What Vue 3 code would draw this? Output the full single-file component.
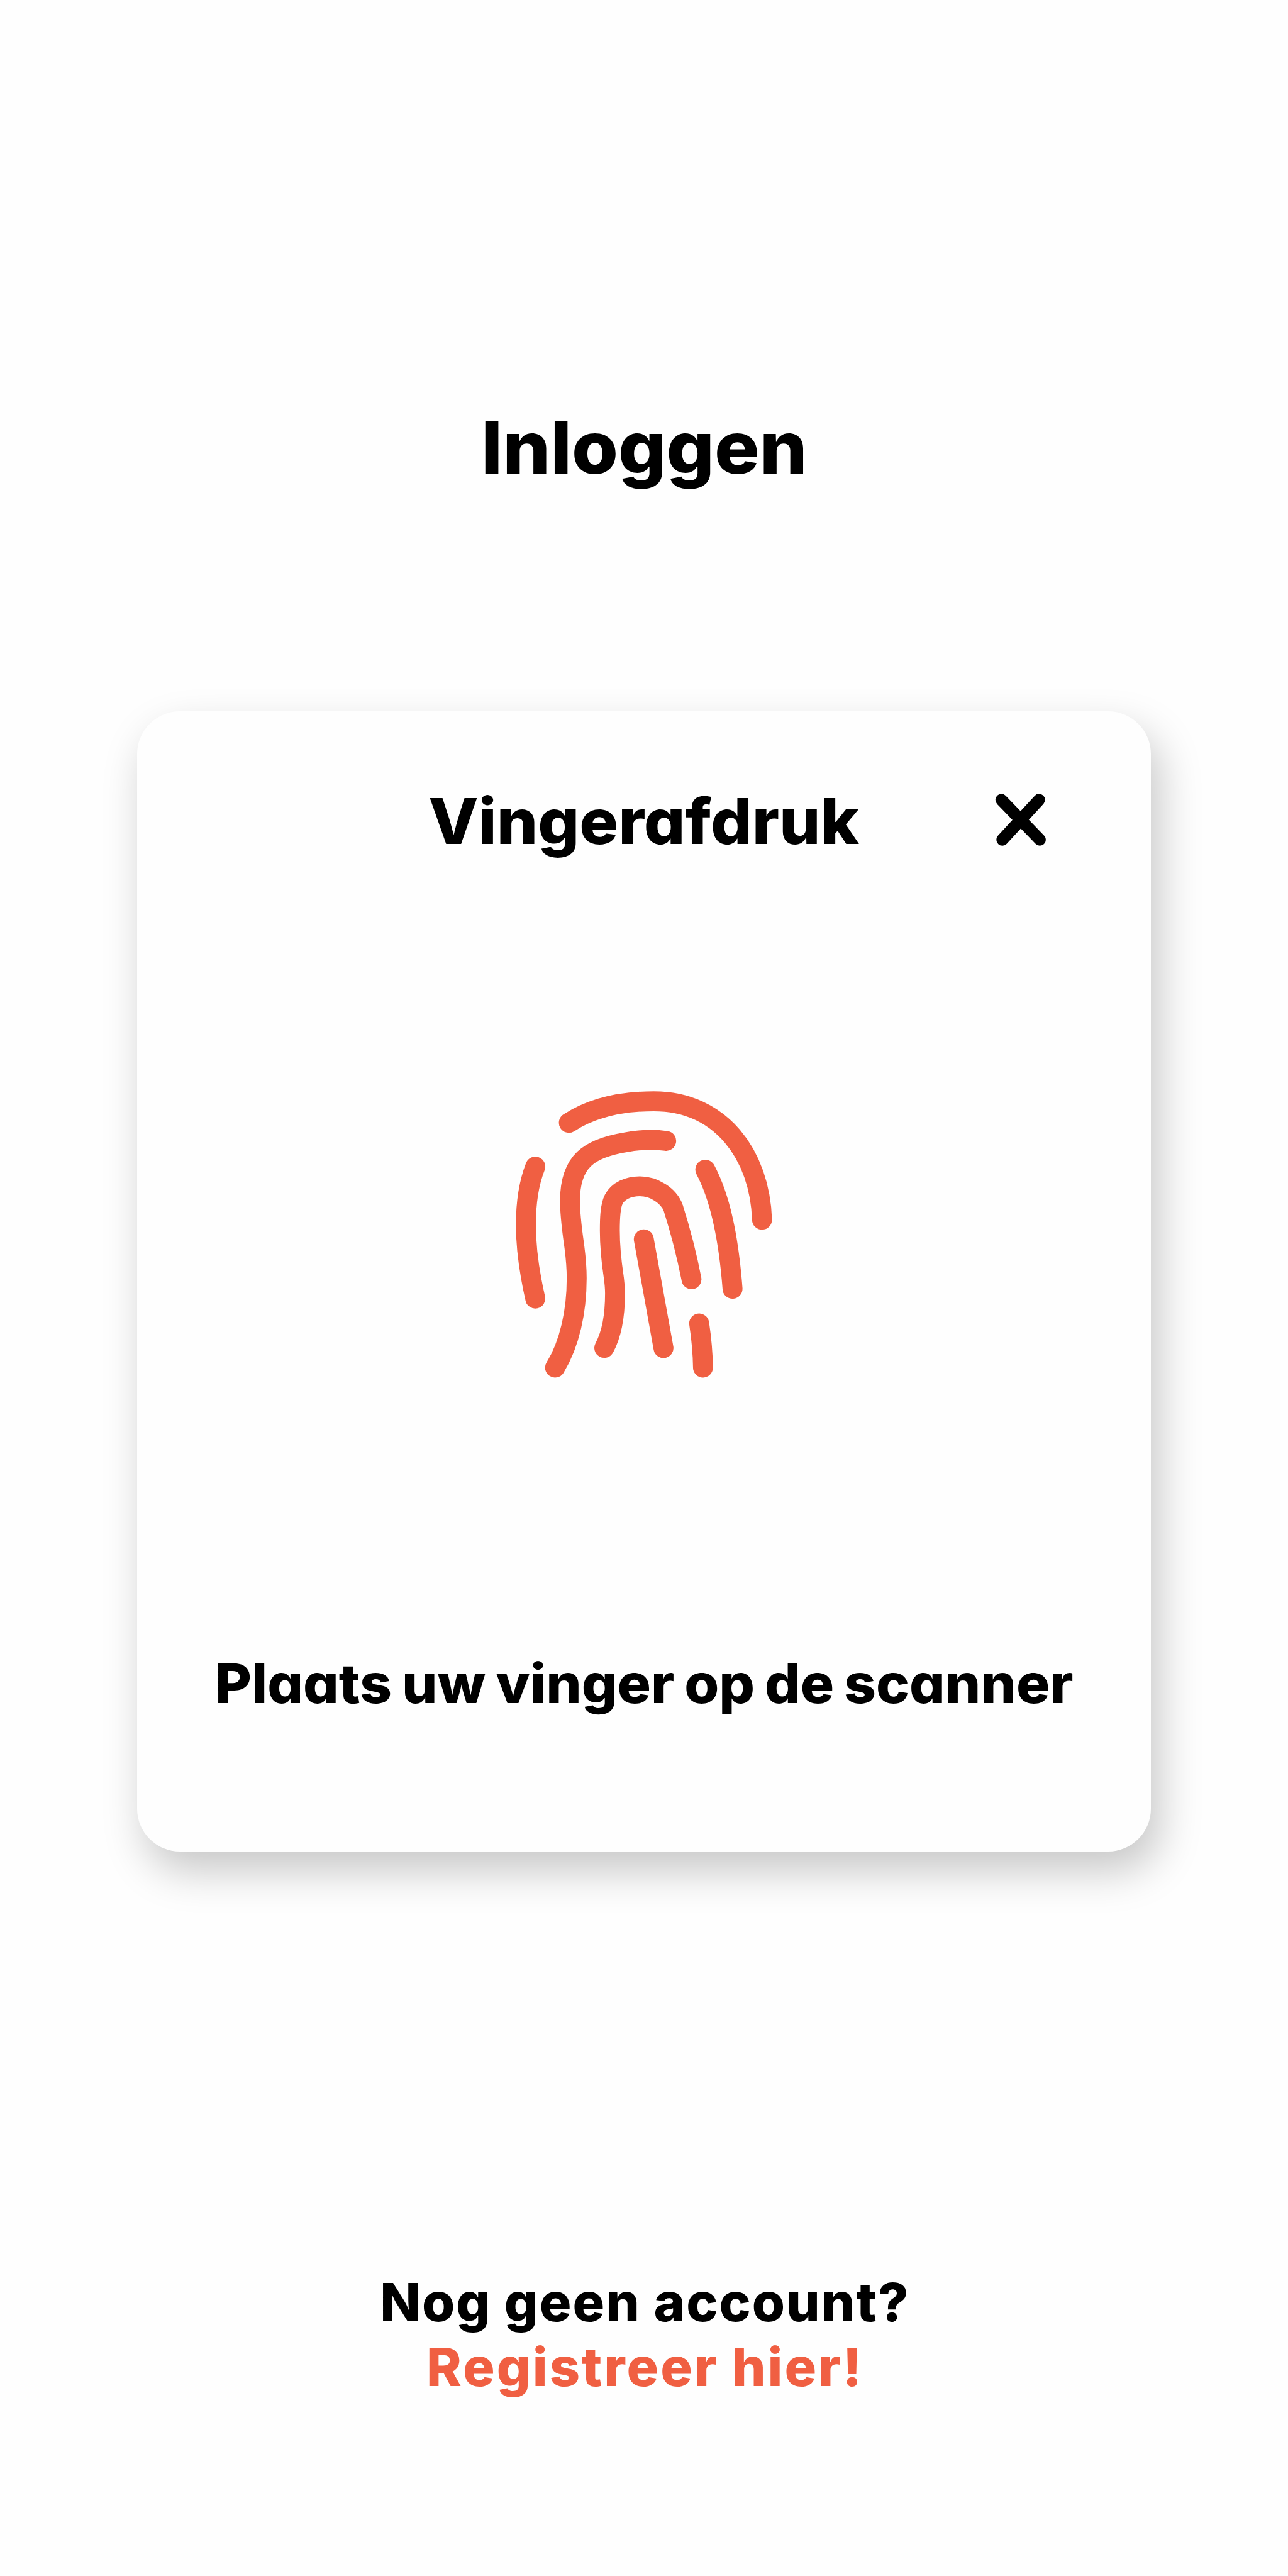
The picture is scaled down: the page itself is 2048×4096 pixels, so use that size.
<script setup>
const ridges = [
  'M175 114.8C230 79 300 64.6 372.8 64.6C530 64.6 620 190 625 340.6',
  'M401.8 156.9C374 153 338 154.5 308 160C222 174 177.7 204 177.7 296.5C177.7 335 184.5 378 188 404C191 427 193.3 452 193.3 477C193.3 553 177 630 142.9 684.9',
  'M96.9 216.7C82 255 75 300 75 351.5C75 410 84 468 96.9 524.2',
  'M492.9 223.8C528 290 547 381 556.3 501.3',
  'M257.6 639C275 607 282.6 560 282.6 512C282.6 498 281 484 279.5 473.5C274 437 270.5 402 270.5 366C270.5 340 271 310 279.5 293C290 273 314 262.6 340.2 262.6C373 262.6 408 284 418.3 313.3C433 360 449 419 460.7 479.3',
  'M349.6 386L395.5 639.5',
  'M478.6 582.1C484 618 487 652 487.5 684.9',
]
</script>

<template>
  <main class="page">
    <h1 class="title">Inloggen</h1>

    <section class="card">
      <header class="card-head">
        <h2 class="card-title">Vingerafdruk</h2>
        <button class="close" type="button" aria-label="Sluiten">
          <svg viewBox="0 0 200 220">
            <path d="M51.7 62.7L141.3 155.7M139.5 62.7L53.9 155.7" />
          </svg>
        </button>
      </header>
      <svg class="fingerprint" viewBox="0 0 700 750">
        <path v-for="d in ridges" :key="d" :d="d" />
      </svg>
      <p class="hint">Plaats uw vinger op de scanner</p>
    </section>

    <footer class="signup">
      <p class="question">Nog geen account?</p>
      <a class="register">Registreer hier!</a>
    </footer>
  </main>
</template>

<style>
body {
  margin: 0;
  background: #fefefe;
}
</style>

<style scoped>
.page {
  box-sizing: border-box;
  width: 2048px;
  height: 4096px;
  padding-top: 642px;
  display: flex;
  flex-direction: column;
  align-items: center;
  overflow: hidden;
  background: #fefefe;
  color: #000;
  font-family: Inter, sans-serif;
  font-weight: 800;
}

.title,
.card-title,
.hint,
.question {
  margin: 0;
  font-weight: 800;
  white-space: nowrap;
  text-align: center;
}

/* single-storey a and slightly extended letterforms */
.title,
.card-title,
.hint {
  font-feature-settings: 'cv11' 1;
}

.title {
  font-size: 115px;
  line-height: 140px;
  transform: scaleX(1.04);
}

.card {
  box-sizing: border-box;
  width: 1612px;
  height: 1813px;
  margin-top: 349px;
  padding-top: 98px;
  display: flex;
  flex-direction: column;
  align-items: center;
  border-radius: 68px;
  background: #fefefe;
  box-shadow: 13.7px 31px 67px rgba(0, 0, 0, 0.22);
}

.card-head {
  width: 1338px;
  display: grid;
  grid-template-columns: 136.5px 1fr 136.5px;
  align-items: center;
}

.card-title {
  grid-column: 2;
  padding-top: 3px;
  font-size: 100px;
  line-height: 120px;
  transform: translateX(-1px) scaleX(1.032);
}

.close {
  padding: 0;
  border: 0;
  background: none;
}

.close svg {
  display: block;
  width: 136.5px;
  height: 150.2px;
  fill: none;
  stroke: #000;
  stroke-width: 27.8;
  stroke-linecap: round;
}

.fingerprint {
  width: 477.9px;
  height: 512px;
  margin-top: 328.3px;
  fill: none;
  stroke: #f05f42;
  stroke-width: 46.4;
  stroke-linecap: round;
  stroke-linejoin: round;
}

.hint {
  margin-top: 407.5px;
  font-size: 86px;
  line-height: 100px;
  word-spacing: -3.5px;
  transform: scaleX(1.035);
}

.signup {
  margin-top: 665.2px;
  display: flex;
  flex-direction: column;
  align-items: center;
  font-size: 84.5px;
  line-height: 102.4px;
}

.question {
  letter-spacing: 2px;
  text-indent: 3px;
}

.register {
  color: #f05f42;
  letter-spacing: 3px;
  padding-left: 3px;
}
</style>
